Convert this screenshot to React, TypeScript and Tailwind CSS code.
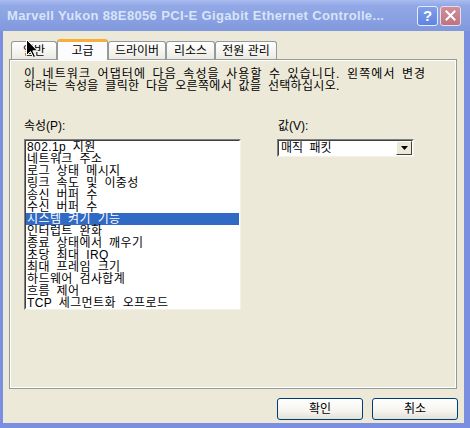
import React from "react";

const items = [
  "802.1p 지원",
  "네트워크 주소",
  "로그 상태 메시지",
  "링크 속도 및 이중성",
  "송신 버퍼 수",
  "수신 버퍼 수",
  "시스템 켜기 기능",
  "인터럽트 완화",
  "종료 상태에서 깨우기",
  "초당 최대 IRQ",
  "최대 프레임 크기",
  "하드웨어 검사합계",
  "흐름 제어",
  "TCP 세그먼트화 오프로드",
];

const tabs = [
  { label: "일반", w: "w-[46px]", sel: false },
  { label: "고급", w: "w-[51px]", sel: true },
  { label: "드라이버", w: "w-[58px]", sel: false },
  { label: "리소스", w: "w-[49px]", sel: false },
  { label: "전원 관리", w: "w-[62px]", sel: false },
];

export default function App() {
  return (
    <div className="relative w-[470px] h-[428px] flex flex-col overflow-hidden bg-[#ece9d8] text-black [font-family:'Liberation_Sans','Noto_Sans_CJK_KR',sans-serif]">
      {/* Title bar */}
      <div className="h-[31px] shrink-0 flex items-center pl-[7px] pr-[9px] bg-[linear-gradient(to_bottom,#a9bcf0_0%,#92a8e6_18%,#8aa1e2_60%,#8099dd_100%)]">
        <span className="text-[13px] font-bold tracking-[0.35px] text-[#d8e4f8] whitespace-nowrap [font-family:'Liberation_Sans',sans-serif]">
          Marvell Yukon 88E8056 PCI-E Gigabit Ethernet Controlle...
        </span>
        <div className="ml-auto flex items-center gap-[2px]">
          <div className="w-[21px] h-[20px] rounded-[3px] border border-[#e6ecfb] bg-[linear-gradient(to_bottom,#7f9fec,#5f84e2)] flex items-center justify-center">
            <span className="text-white font-bold text-[15px] leading-none [font-family:'Liberation_Sans',sans-serif]">?</span>
          </div>
          <div className="w-[21px] h-[20px] rounded-[3px] border border-[#eddbe0] bg-[linear-gradient(to_bottom,#d08e9c,#bd7483)] flex items-center justify-center">
            <svg width="11" height="11" viewBox="0 0 11 11">
              <path d="M1.5 1.5 L9.5 9.5 M9.5 1.5 L1.5 9.5" stroke="#ffffff" strokeWidth="2" strokeLinecap="square" />
            </svg>
          </div>
        </div>
      </div>

      {/* Body */}
      <div className="flex-1 flex flex-col border-l-[3px] border-r-[6px] border-b-[5px] border-[#7a8fe0] pt-[8px]">
        {/* Tabs */}
        <div className="relative z-10 flex items-end h-[20px] ml-[8px]">
          {tabs.map((t) =>
            t.sel ? (
              <div
                key={t.label}
                className={`${t.w} h-[21px] -mb-[1px] rounded-t-[3px] border-x border-[#919b9c] border-t-[3px] border-t-[#f6ae3c] bg-[#fcfcfe] flex items-center justify-center text-[12px] leading-[12px] whitespace-nowrap`}
              >
                {t.label}
              </div>
            ) : (
              <div
                key={t.label}
                className={`${t.w} h-[18px] rounded-t-[3px] border border-b-0 border-[#919b9c] bg-[linear-gradient(to_bottom,#ffffff,#f4f3ee_60%,#ebe9e1)] flex items-center justify-center text-[12px] leading-[12px] whitespace-nowrap`}
              >
                {t.label}
              </div>
            )
          )}
        </div>

        {/* Panel */}
        <div className="ml-[6px] w-[448px] h-[330px] border border-[#919b9c] bg-[#ece9d8]">
          <div className="h-full border border-white pt-[7px] pl-[13px] text-[12px] leading-[12px]">
            <div className="whitespace-nowrap tracking-[1.1px] [word-spacing:2px]">
              이 네트워크 어댑터에 다음 속성을 사용할 수 있습니다. 왼쪽에서 변경
            </div>
            <div className="whitespace-nowrap tracking-[0.3px] [word-spacing:3px]">하려는 속성을 클릭한 다음 오른쪽에서 값을 선택하십시오.</div>

            <div className="mt-[28px] flex">
              <div className="w-[217px]">
                <div className="h-[12px] mb-[7px] whitespace-nowrap">속성(P):</div>
                <div className="w-[217px] h-[171px] border border-t-[#808080] border-l-[#808080] border-b-[#f4f2e8] border-r-[#f4f2e8]">
                  <div className="h-full border border-t-[#404040] border-l-[#404040] border-b-white border-r-white bg-white">
                    {items.map((it, i) => (
                      <div
                        key={it}
                        className={`h-[12px] leading-[12px] pl-[1px] whitespace-nowrap tracking-[0.4px] [word-spacing:3px] ${
                          i === 6 ? "bg-[#316ac5] text-white" : ""
                        }`}
                      >
                        {it}
                      </div>
                    ))}
                  </div>
                </div>
              </div>

              <div className="ml-[36px] w-[137px]">
                <div className="h-[12px] mb-[7px] pl-[1px] whitespace-nowrap">값(V):</div>
                <div className="w-[137px] h-[18px] border border-t-[#808080] border-l-[#808080] border-b-[#f4f2e8] border-r-[#f4f2e8]">
                  <div className="h-full flex items-center border border-t-[#404040] border-l-[#404040] border-b-white border-r-white bg-white">
                    <span className="pl-[2px] whitespace-nowrap [word-spacing:3px]">매직 패킷</span>
                    <div className="ml-auto w-[16px] h-[14px] border border-t-white border-l-white border-b-[#404040] border-r-[#404040] bg-[#ece9d8] flex items-center justify-center">
                      <svg width="7" height="4" viewBox="0 0 7 4">
                        <path d="M0 0 H7 L3.5 4 Z" fill="#000" />
                      </svg>
                    </div>
                  </div>
                </div>
              </div>
            </div>
          </div>
        </div>

        {/* Buttons */}
        <div className="flex justify-end gap-[9px] mt-[9px] pr-[6px]">
          {["확인", "취소"].map((b) => (
            <div
              key={b}
              className="w-[86px] h-[22px] rounded-[3px] border border-[#003c74] bg-[linear-gradient(to_bottom,#ffffff,#f5f4ef_60%,#e4e1d6)] flex items-center justify-center text-[12px] leading-[12px]"
            >
              {b}
            </div>
          ))}
        </div>
      </div>

      {/* Mouse cursor */}
      <svg className="absolute left-[26px] top-[39px] z-20" width="13" height="20" viewBox="0 0 13 20">
        <path d="M0.5 0.5 L0.5 16.5 L4.5 12.5 L7.5 18.5 L9.5 17.5 L6.8 11.8 L11.5 11.8 Z" fill="#000" stroke="#fff" strokeWidth="1" />
      </svg>
    </div>
  );
}
